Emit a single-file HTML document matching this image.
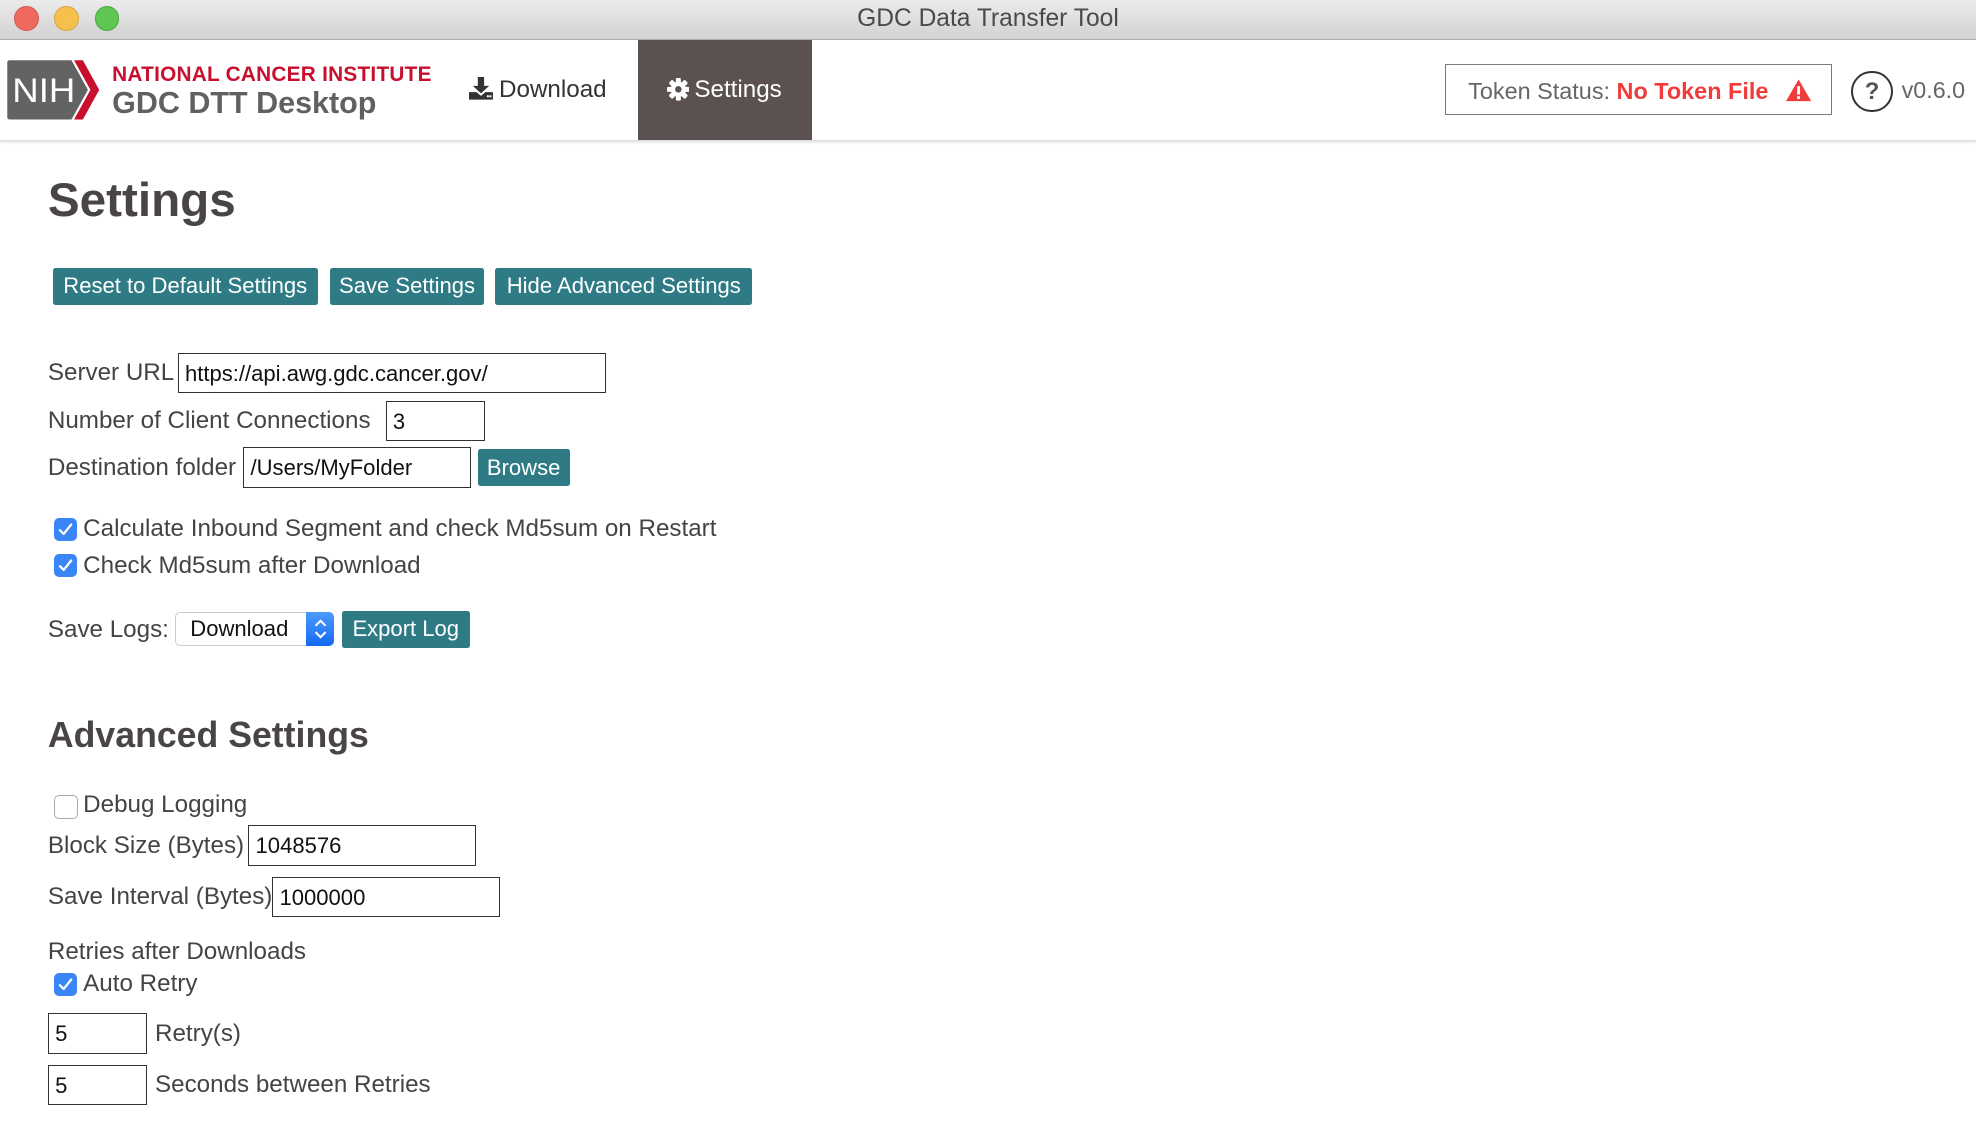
<!DOCTYPE html>
<html><head><meta charset="utf-8"><style>
html,body{margin:0;padding:0;background:#fff;overflow:hidden}
body{width:1976px;height:1144px}
#w{zoom:1.26020;position:relative;width:1568px;height:908px;font-family:"Liberation Sans",Arial,sans-serif;color:#444}
.a{position:absolute;white-space:nowrap}
.tb{left:0;top:0;width:1568px;height:31px;background:linear-gradient(#ebebeb,#d2d2d2);border-bottom:1px solid #adadad}
.dot{position:absolute;top:5px;width:18px;height:18px;border-radius:50%}
.hdr{left:0;top:32px;width:1568px;height:79px;background:#fff;border-bottom:1px solid #ddd;box-shadow:0 1px 2px rgba(0,0,0,.12)}
.btn{position:absolute;background:#2e7b85;color:#fff;font-size:17.5px;border-radius:2px;text-align:center;line-height:29px;height:29px}
.lbl{position:absolute;font-size:19.2px;color:#444;white-space:nowrap}
.inp{position:absolute;border:1.5px solid #333;background:#fff;font-size:17.5px;color:#111;height:29px;line-height:29px;padding-left:5px;box-sizing:border-box}
.cb{position:absolute;left:43px;width:18px;height:18px;border-radius:4px;background:#3b86f7}
.cb svg{position:absolute;left:3px;top:3px}
.cbe{position:absolute;left:43px;width:17px;height:17px;border-radius:4px;border:1px solid #aaa;background:#fff}
</style></head><body><div id="w">
<div class="a tb"></div>
<div class="dot" style="left:11px;background:#ee6a5e;border:0.5px solid #d65a4f"></div>
<div class="dot" style="left:43px;background:#f6c04f;border:0.5px solid #d9a53c"></div>
<div class="dot" style="left:75px;background:#5fc653;border:0.5px solid #4ca83f"></div>
<div class="a" style="left:0;width:1568px;top:4px;text-align:center;font-size:19.5px;color:#4a4a4a">GDC Data Transfer Tool</div>
<div class="a hdr"></div>
<svg class="a" style="left:5px;top:47px" width="76" height="49" viewBox="0 0 76 49">
<path d="M3 1H52L65 24.5L52 48H3Q1 48 1 46V3Q1 1 3 1Z" fill="#636363"/>
<path d="M54 1H61L74 24.5L61 48H54L67 24.5Z" fill="#c8102e"/>
<text x="5" y="34" font-family="Liberation Sans" font-size="27" fill="#fff" textLength="50" lengthAdjust="spacingAndGlyphs">NIH</text>
</svg>
<div class="a" style="left:89px;top:50px;font-size:16.5px;font-weight:bold;color:#c8102e;letter-spacing:0.2px">NATIONAL CANCER INSTITUTE</div>
<div class="a" style="left:89px;top:68px;font-size:24.2px;font-weight:bold;color:#606060">GDC DTT Desktop</div>
<svg class="a" style="left:372px;top:61px" width="19" height="18" viewBox="0 0 19 18"><path d="M7 0h5v7h4l-6.5 6L3 7h4z" fill="#333"/><path d="M0 12h6l3.5 3 3.5-3h6v6H0z" fill="#333"/><circle cx="15" cy="15.3" r="0.9" fill="#fff"/><circle cx="17" cy="15.3" r="0.9" fill="#fff"/></svg>
<div class="a" style="left:396px;top:60px;font-size:19.2px;color:#333">Download</div>
<div class="a" style="left:506px;top:32px;width:138px;height:79px;background:#5a5150"></div>
<svg class="a" style="left:529px;top:62px" width="18" height="18" viewBox="0 0 18 18"><g fill="#fff"><circle cx="9" cy="9" r="6"/><rect x="7" y="0" width="4" height="18" rx="1"/><rect x="0" y="7" width="18" height="4" rx="1"/><rect x="7" y="0" width="4" height="18" rx="1" transform="rotate(45 9 9)"/><rect x="7" y="0" width="4" height="18" rx="1" transform="rotate(-45 9 9)"/></g><circle cx="9" cy="9" r="2.6" fill="#5a5150"/></svg>
<div class="a" style="left:551px;top:60px;font-size:19.2px;color:#fff">Settings</div>
<div class="a" style="left:1147px;top:51px;width:305px;height:39px;border:1.5px solid #7a7a7a"></div>
<div class="a" style="left:1165px;top:62px;font-size:18.6px;color:#666">Token Status: <b style="color:#f23c3c">No Token File</b></div>
<svg class="a" style="left:1417px;top:63px" width="20" height="18" viewBox="0 0 21 18"><path d="M10.5 0L21 18H0z" fill="#f23c3c"/><rect x="9.3" y="5.5" width="2.4" height="7" fill="#fff"/><rect x="9.3" y="13.8" width="2.4" height="2.4" fill="#fff"/></svg>
<div class="a" style="left:1469px;top:56px;width:30px;height:30px;border:1.8px solid #333;border-radius:50%;text-align:center;line-height:30px;font-size:19px;font-weight:bold;color:#555">?</div>
<div class="a" style="left:1509px;top:61px;font-size:18.5px;color:#666">v0.6.0</div>

<div class="a" style="left:38px;top:137px;font-size:37.8px;font-weight:bold;color:#4a4545">Settings</div>
<div class="btn" style="left:42px;top:213px;width:210px">Reset to Default Settings</div>
<div class="btn" style="left:262px;top:213px;width:122px">Save Settings</div>
<div class="btn" style="left:393px;top:213px;width:204px">Hide Advanced Settings</div>

<div class="lbl" style="left:38px;top:285px">Server URL</div>
<div class="inp" style="left:141px;top:280px;width:340px;height:32px;line-height:31px">https://api.awg.gdc.cancer.gov/</div>
<div class="lbl" style="left:38px;top:323px">Number of Client Connections</div>
<div class="inp" style="left:306px;top:318px;width:79px;height:32px;line-height:31px">3</div>
<div class="lbl" style="left:38px;top:360px">Destination folder</div>
<div class="inp" style="left:193px;top:355px;width:181px;height:32px;line-height:31px">/Users/MyFolder</div>
<div class="btn" style="left:379px;top:356px;width:73px;height:30px;line-height:30px">Browse</div>

<div class="cb" style="top:411px"><svg width="12" height="12" viewBox="0 0 12 12"><path d="M1.5 6.5L4.5 9.5L10.5 2" stroke="#fff" stroke-width="1.8" fill="none" stroke-linecap="round" stroke-linejoin="round"/></svg></div>
<div class="lbl" style="left:66px;top:409px">Calculate Inbound Segment and check Md5sum on Restart</div>
<div class="cb" style="top:440px"><svg width="12" height="12" viewBox="0 0 12 12"><path d="M1.5 6.5L4.5 9.5L10.5 2" stroke="#fff" stroke-width="1.8" fill="none" stroke-linecap="round" stroke-linejoin="round"/></svg></div>
<div class="lbl" style="left:66px;top:438px">Check Md5sum after Download</div>

<div class="lbl" style="left:38px;top:489px">Save Logs:</div>
<div class="a" style="left:139px;top:486px;width:125px;height:27px;border:1px solid #ccc;border-radius:4px;background:#fff;box-sizing:border-box"></div>
<div class="a" style="left:151px;top:489px;font-size:17.5px;color:#111">Download</div>
<div class="a" style="left:243px;top:486px;width:22px;height:27px;background:linear-gradient(#4a9bff,#1569f0);border-radius:0 4px 4px 0"></div>
<svg class="a" style="left:248px;top:490px" width="12" height="19" viewBox="0 0 12 19"><path d="M2 7L6 3L10 7M2 12L6 16L10 12" stroke="#fff" stroke-width="1.6" fill="none"/></svg>
<div class="btn" style="left:271px;top:485px;width:102px">Export Log</div>

<div class="a" style="left:38px;top:567px;font-size:28.3px;font-weight:bold;color:#4a4545">Advanced Settings</div>
<div class="cbe" style="top:631px"></div>
<div class="lbl" style="left:66px;top:628px">Debug Logging</div>
<div class="lbl" style="left:38px;top:660px">Block Size (Bytes)</div>
<div class="inp" style="left:197px;top:655px;width:181px;height:32px;line-height:31px">1048576</div>
<div class="lbl" style="left:38px;top:701px">Save Interval (Bytes)</div>
<div class="inp" style="left:216px;top:696px;width:181px;height:32px;line-height:31px">1000000</div>
<div class="lbl" style="left:38px;top:744px">Retries after Downloads</div>
<div class="cb" style="top:772px"><svg width="12" height="12" viewBox="0 0 12 12"><path d="M1.5 6.5L4.5 9.5L10.5 2" stroke="#fff" stroke-width="1.8" fill="none" stroke-linecap="round" stroke-linejoin="round"/></svg></div>
<div class="lbl" style="left:66px;top:770px">Auto Retry</div>
<div class="inp" style="left:38px;top:804px;width:79px;height:32px;line-height:31px">5</div>
<div class="lbl" style="left:123px;top:809px">Retry(s)</div>
<div class="inp" style="left:38px;top:845px;width:79px;height:32px;line-height:31px">5</div>
<div class="lbl" style="left:123px;top:850px">Seconds between Retries</div>
</div></body></html>
